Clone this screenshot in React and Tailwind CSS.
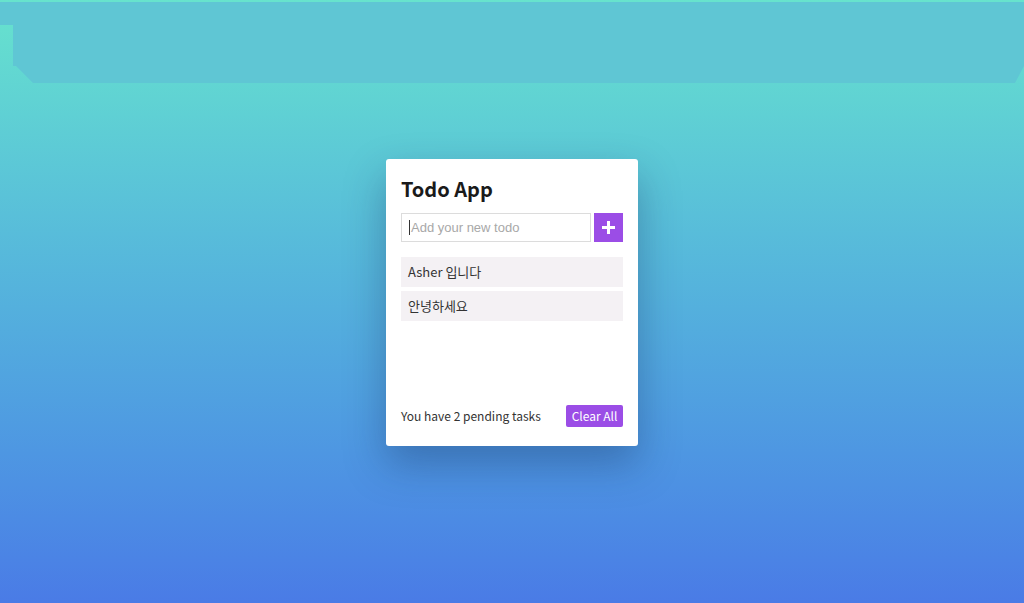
import React from "react";

export default function App() {
  const todos = ["Asher 입니다", "안녕하세요"];
  return (
    <div className="relative w-full h-[603px] overflow-hidden bg-gradient-to-b from-[#67e3cd] to-[#4a7be6] flex items-center justify-center font-['Noto_Sans_CJK_KR','Noto_Sans',sans-serif]">
      <div className="absolute left-0 right-0 top-[2px] h-[81px] bg-[#5fc6d4] [clip-path:polygon(0_0,100%_0,100%_64px,calc(100%-9px)_81px,33px_81px,16px_64px,13px_64px,13px_23px,0_23px)]" />
      <div className="relative mt-[2px] w-[252px] h-[287px] bg-white rounded-[3px] shadow-[0_18px_40px_rgba(20,40,90,0.35)] flex flex-col px-[15px] pt-[15px] pb-[19px]">
        <h1 className="text-[20px] leading-[30px] font-bold text-[#1a1a1a] mb-[9px]">Todo App</h1>
        <div className="flex gap-[3px] h-[29px]">
          <div className="w-[190px] h-[29px] border border-[#dcdcdc] flex items-center pl-[7px]">
            <span className="w-px h-[15px] bg-[#333]" />
            <span className="text-[13px] text-[#a8a8a8] font-['Liberation_Sans',sans-serif] ml-px">Add your new todo</span>
          </div>
          <button className="w-[29px] h-[29px] bg-[#9b4de6] flex items-center justify-center">
            <svg width="15" height="15" viewBox="0 0 15 15">
              <path d="M7.5 1v13M1 7.5h13" stroke="white" strokeWidth="3" />
            </svg>
          </button>
        </div>
        <ul className="mt-[15px] flex flex-col gap-[4px]">
          {todos.map((t) => (
            <li key={t} className="h-[30px] bg-[#f4f1f4] flex items-center pl-[7px] text-[13px] text-[#333]">
              {t}
            </li>
          ))}
        </ul>
        <div className="mt-auto flex items-center justify-between">
          <span className="text-[12px] text-[#333]">You have 2 pending tasks</span>
          <button className="w-[57px] h-[22px] bg-[#9b4de6] text-white text-[12px] rounded-[2px] flex items-center justify-center">Clear All</button>
        </div>
      </div>
    </div>
  );
}
